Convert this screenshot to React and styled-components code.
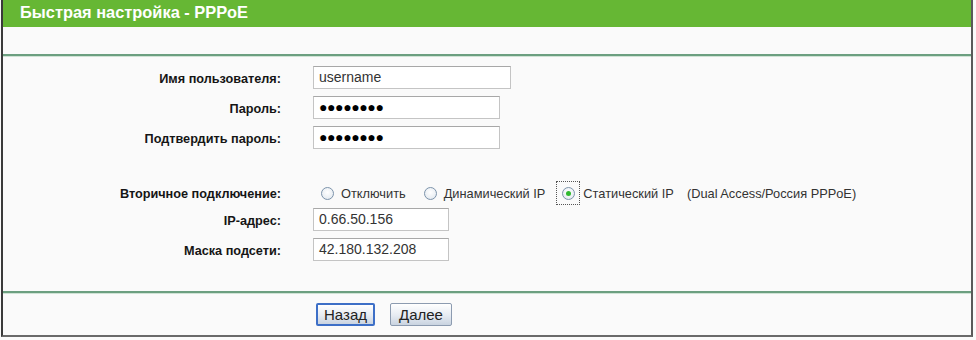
import React from 'react';
import styled, { createGlobalStyle } from 'styled-components';

const Global = createGlobalStyle`
  html, body { margin: 0; padding: 0; background: #fafafa; }
  body { font-family: "Liberation Sans", Arial, sans-serif; font-size: 12px; color: #000; }
`;

const Frame = styled.div`
  width: 968px;
  height: 335px;
  margin-left: 1px;
  border-left: 2px solid #3a3a3a;
  border-right: 2px solid #5a5a5a;
  border-bottom: 2px solid #6a6a6a;
  background: #fafafa;
  display: flex;
  flex-direction: column;
`;

const Header = styled.div`
  height: 27px;
  background: #66b734;
  color: #fff;
  font-weight: bold;
  font-size: 16.4px;
  line-height: 25px;
  padding-left: 17px;
`;

const Divider = styled.div`
  height: 2px;
  background: #6c9f80;
  border-bottom: 1px solid #cfe3d5;
  margin-top: ${p => p.$top}px;
`;

const Form = styled.div`
  display: grid;
  grid-template-columns: 278px 1fr;
  column-gap: 32px;
  padding-top: 9px;
`;

const Label = styled.div`
  font-weight: bold;
  font-size: 12.7px;
  text-align: right;
  height: 30px;
  line-height: 26px;
  margin-top: ${p => p.$top || 0}px;
  color: #151515;
`;

const Cell = styled.div`
  height: 30px;
  display: flex;
  align-items: flex-start;
  margin-top: ${p => p.$top || 0}px;
`;

const Field = styled.div`
  box-sizing: border-box;
  width: ${p => p.$w}px;
  height: 23px;
  border: 1px solid #c4c4c4;
  border-top-color: #a8a8a8;
  background: #fff;
  padding-left: 5px;
  line-height: 21px;
  font-size: 14px;
  color: #333;
`;

const Dots = styled.span`
  font-size: 14px;
  letter-spacing: -0.4px;
  color: #000;
`;

const RadioRow = styled.div`
  display: flex;
  align-items: center;
  height: 26px;
  margin-top: -1px;
`;

const Option = styled.div`
  display: flex;
  align-items: center;
  margin-right: ${p => p.$mr || 0}px;
  color: #333;
  font-size: 12.8px;
`;

const Focus = styled.div`
  width: 22px;
  height: 22px;
  border: 1px dotted #555;
  display: flex;
  align-items: center;
  justify-content: center;
  margin-right: 3px;
`;

const Circle = styled.span`
  box-sizing: border-box;
  width: 13px;
  height: 13px;
  border-radius: 50%;
  border: 1px solid #7c93ab;
  background: radial-gradient(circle at 50% 40%, #ffffff 0%, #e8edf2 70%, #cdd6df 100%);
  display: inline-flex;
  align-items: center;
  justify-content: center;
  margin: ${p => p.$inBox ? '0' : '0 7px 0 8px'};
  &::after {
    content: '';
    display: ${p => p.$checked ? 'block' : 'none'};
    width: 5px;
    height: 5px;
    border-radius: 50%;
    background: #2fb82f;
  }
`;

const Note = styled.span`
  margin-left: 13px;
  font-size: 12.8px;
  color: #333;
`;

const Buttons = styled.div`
  display: flex;
  gap: 15px;
  padding-left: 313px;
  padding-top: 9px;
`;

const Button = styled.div`
  box-sizing: border-box;
  height: 23px;
  padding: 0 ${p => p.$primary ? 6 : 8}px;
  border: ${p => p.$primary ? '2px solid #3d6fc7' : '1px solid #8c9bb0'};
  border-radius: 2px;
  background: linear-gradient(#ffffff, #e6ebf2 55%, #c9d3e0);
  font-size: 15px;
  line-height: ${p => p.$primary ? 19 : 21}px;
  color: #222;
`;

const Radio = ({ checked, label, mr, focused }) => (
  <Option $mr={mr}>
    {focused ? (
      <Focus><Circle $inBox $checked={checked} /></Focus>
    ) : (
      <Circle $checked={checked} />
    )}
    {label}
  </Option>
);

const App = () => (
  <>
    <Global />
    <Frame>
      <Header>Быстрая настройка - PPPoE</Header>
      <Divider $top={27} />
      <Form>
        <Label>Имя пользователя:</Label>
        <Cell><Field $w={198}>username</Field></Cell>
        <Label>Пароль:</Label>
        <Cell><Field $w={187}><Dots>●●●●●●●●</Dots></Field></Cell>
        <Label>Подтвердить пароль:</Label>
        <Cell><Field $w={187}><Dots>●●●●●●●●</Dots></Field></Cell>

        <Label $top={25}>Вторичное подключение:</Label>
        <Cell $top={25}>
          <RadioRow>
            <Radio label="Отключить" mr={10} />
            <Radio label="Динамический IP" mr={11} />
            <Radio label="Статический IP" checked focused />
            <Note>(Dual Access/Россия PPPoE)</Note>
          </RadioRow>
        </Cell>
        <Label $top={-3}>IP-адрес:</Label>
        <Cell $top={-3}><Field $w={136}>0.66.50.156</Field></Cell>
        <Label>Маска подсети:</Label>
        <Cell><Field $w={136}>42.180.132.208</Field></Cell>
      </Form>
      <Divider $top={23} />
      <Buttons>
        <Button $primary>Назад</Button>
        <Button>Далее</Button>
      </Buttons>
    </Frame>
  </>
);

export default App;
